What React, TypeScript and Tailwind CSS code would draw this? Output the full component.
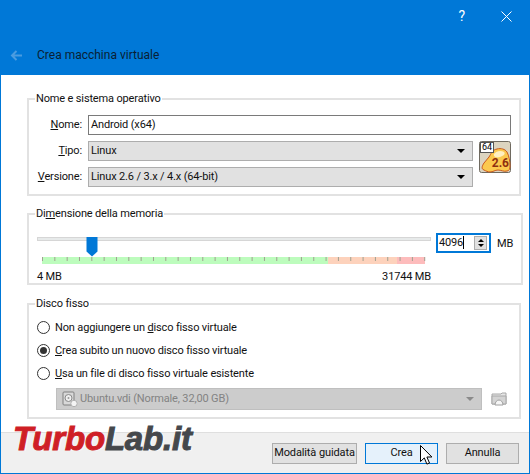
/**
 * Crea macchina virtuale dialog
 * VirtualBox wizard in expert mode
 */

const TICKS = Array.from({ length: 32 }, (_, i) => 0.5 + i * 12.33);

function LinuxIcon() {
  return (
    <div className="relative w-8 h-8 shrink-0">
      <svg width="32" height="32" viewBox="0 0 32 32" className="block">
        <rect x="0.5" y="0.5" width="31" height="31" rx="2" fill="#dcd4c0" stroke="#6f6a60" />
        <path
          d="M5 29c-3-1-2-4 0-7 2-2 3-4 5-6 2-3 3-7 8-8 4-1 8 0 10 3 2 4 3 9 3 14 0 3-1 5-3 5-3 1-6-1-9-1-3 0-5 2-8 2-2 0-4-1-6-2z"
          fill="#fbc94e"
          stroke="#c9581c"
        />
        <path d="M15 13c2-3 7-4 10-2 2 2-1 4-4 5-3 1-7 0-6-3z" fill="#fff0c0" />
      </svg>
      <span className="absolute right-[2px] bottom-[4px] text-[12px] leading-none font-bold tracking-normal text-[#8f2f10]">2.6</span>
      <span className="absolute left-[1px] top-[1px] w-[14px] h-[11px] bg-white border border-[#555] text-[9px] leading-[9px] tracking-normal text-center text-black">64</span>
    </div>
  );
}

function Combo({ label, value }: { label: string; value: string }) {
  return (
    <div className="h-5 flex-1 flex items-center justify-between bg-[#e1e1e1] border border-[#adadad] pl-[2px] pr-[7px]">
      <span>{value}</span>
      <span className="w-0 h-0 border-x-[4px] border-x-transparent border-t-[4px] border-t-black" aria-label={label} />
    </div>
  );
}

function Radio({ checked, children }: { checked?: boolean; children: React.ReactNode }) {
  return (
    <div className="flex items-center gap-[5px] h-[13px]">
      <span className="w-[13px] h-[13px] rounded-full border border-[#333] bg-white flex items-center justify-center">
        {checked && <span className="w-[7px] h-[7px] rounded-full bg-[#333]" />}
      </span>
      <span>{children}</span>
    </div>
  );
}

function DiskIcon() {
  return (
    <svg width="16" height="16" viewBox="0 0 16 16" className="shrink-0">
      <rect x="1" y="1" width="11" height="13" rx="1" fill="#d8d8d8" stroke="#808080" />
      <circle cx="6.5" cy="7" r="3.5" fill="#efefef" stroke="#8a8a8a" />
      <circle cx="6.5" cy="7" r="1" fill="#9a9a9a" />
      <circle cx="12" cy="12.5" r="3.2" fill="#f4f4f4" stroke="#b0b0b0" />
    </svg>
  );
}

function FolderIcon() {
  return (
    <svg width="16" height="16" viewBox="0 0 16 16" className="shrink-0">
      <path d="M1 3h9l1-1h4v11H1z" fill="#e6e6e6" stroke="#a8a8a8" />
      <path d="M1 5h14v8H1z" fill="#d4d4d4" stroke="#a8a8a8" />
      <path d="M4 14c0-3 2-5 4-5s4 2 4 5z" fill="#f6f6f6" stroke="#a0a0a0" />
    </svg>
  );
}

export default function App() {
  return (
    <div className="relative w-[530px] h-[474px] overflow-hidden flex flex-col bg-white border border-[#0078d7] font-['Roboto',sans-serif] text-[11px] leading-4 tracking-[-0.15px] text-[#111]">
      {/* Title bar */}
      <div className="h-[74px] bg-[#0078d7] flex flex-col shrink-0">
        <div className="flex justify-end items-center h-[30px] text-white">
          <span className="text-[14px] mr-[36px]">?</span>
          <svg width="11" height="11" viewBox="0 0 11 11" className="mr-[17px]">
            <path d="M0.5 0.5l10 10M10.5 0.5l-10 10" stroke="#fff" fill="none" />
          </svg>
        </div>
        <div className="flex items-center pl-[9px] mt-[16px]">
          <svg width="13" height="11" viewBox="0 0 13 11">
            <path d="M12 5.5H2M6.5 1L2 5.5 6.5 10" stroke="#4a9ce0" strokeWidth="2" fill="none" />
          </svg>
          <span className="ml-[14px] text-[12px] tracking-normal text-[#0a1f33]">Crea macchina virtuale</span>
        </div>
      </div>

      {/* Groups */}
      <div className="flex-1 flex flex-col pl-[26px] pr-[8px] pt-[16px]">
        <fieldset className="h-[105px] border-2 border-[#e2e2e2] px-[8px]">
          <legend className="-ml-[2px] px-[1px]">Nome e sistema operativo</legend>
          <div className="flex flex-col gap-[6px] pt-[8px]">
            <div className="flex items-center gap-[6px]">
              <span className="w-[45px] text-right"><span className="underline">N</span>ome:</span>
              <div className="h-5 flex-1 flex items-center border border-[#7a7a7a] pl-[2px]">Android (x64)</div>
            </div>
            <div className="flex gap-[6px]">
              <div className="flex-1 flex flex-col gap-[6px]">
                <div className="flex items-center gap-[6px]">
                  <span className="w-[45px] text-right"><span className="underline">T</span>ipo:</span>
                  <Combo label="Tipo" value="Linux" />
                </div>
                <div className="flex items-center gap-[6px]">
                  <span className="w-[45px] text-right"><span className="underline">V</span>ersione:</span>
                  <Combo label="Versione" value="Linux 2.6 / 3.x / 4.x (64-bit)" />
                </div>
              </div>
              <LinuxIcon />
            </div>
          </div>
        </fieldset>

        <fieldset className="h-[79px] mt-[10px] border-2 border-[#e2e2e2] px-[8px]">
          <legend className="-ml-[2px] px-[1px]">Di<span className="underline">m</span>ensione della memoria</legend>
          <div className="flex gap-[5px] pt-[8px]">
            <div className="w-[394px] shrink-0">
              <div className="relative h-[20px]">
                <div className="h-[4px] mt-[7px] bg-[#e7eaea] border border-[#d6d6d6]" />
                <svg width="12" height="20" viewBox="0 0 12 20" className="absolute left-[49px] top-0">
                  <path d="M0.5 0h11v14.5l-5.5 5-5.5-5z" fill="#0078d7" />
                </svg>
              </div>
              <svg width="384" height="7" viewBox="0 0 384 7" className="block ml-[5px]">
                <rect y="0" width="286" height="7" fill="#bdfcbd" />
                <rect x="286" y="0" width="69" height="7" fill="#fdd2bc" />
                <rect x="355" y="0" width="28" height="7" fill="#fdbcbc" />
                {TICKS.map((x) => (
                  <line key={x} x1={x} x2={x} y1="0" y2="4" stroke="#a0a090" />
                ))}
              </svg>
              <div className="flex justify-between mt-[5px]">
                <span>4 MB</span>
                <span>31744 MB</span>
              </div>
            </div>
            <div className="flex items-start gap-[6px]">
              <div className="w-[55px] h-[20px] flex items-center justify-between border-2 border-[#0078d7] pl-[1px] pr-[2px] mt-[3px]">
                <span>4096<span className="border-r border-black" /></span>
                <div className="w-[13px] h-[14px] bg-[#e1e1e1] border border-[#adadad] flex flex-col items-center justify-center gap-[2px]">
                  <span className="w-0 h-0 border-x-[3px] border-x-transparent border-b-[3px] border-b-black" />
                  <span className="w-0 h-0 border-x-[3px] border-x-transparent border-t-[3px] border-t-black" />
                </div>
              </div>
              <span className="mt-[6px]">MB</span>
            </div>
          </div>
        </fieldset>

        <fieldset className="h-[123px] mt-[11px] border-2 border-[#e2e2e2] px-[8px]">
          <legend className="-ml-[2px] px-[1px]">Disco fisso</legend>
          <div className="flex flex-col gap-[10px] pt-[9px]">
            <Radio>Non aggiungere un <span className="underline">d</span>isco fisso virtuale</Radio>
            <Radio checked><span className="underline">C</span>rea subito un nuovo disco fisso virtuale</Radio>
            <Radio><span className="underline">U</span>sa un file di disco fisso virtuale esistente</Radio>
          </div>
          <div className="flex items-center gap-[9px] mt-[8px] pl-[19px] pr-[4px]">
            <div className="h-[22px] flex-1 flex items-center justify-between bg-[#cccccc] border border-[#bfbfbf] pl-[5px] pr-[7px] text-[#838383]">
              <span className="flex items-center gap-[2px]"><DiskIcon />Ubuntu.vdi (Normale, 32,00 GB)</span>
              <span className="w-0 h-0 border-x-[4px] border-x-transparent border-t-[4px] border-t-[#8a8a8a]" />
            </div>
            <FolderIcon />
          </div>
        </fieldset>
      </div>

      {/* Footer */}
      <div className="h-[41px] shrink-0 bg-[#f0f0f0] border-t border-[#dfdfdf] flex items-center justify-end gap-2 pr-[10px]">
        <div className="w-[85px] h-[21px] flex items-center justify-center bg-[#e1e1e1] border border-[#adadad]">Modalità <span className="underline ml-[3px]">g</span>uidata</div>
        <div className="w-[73px] h-[21px] flex items-center justify-center bg-[#e5f1fb] border border-[#0078d7]">Crea</div>
        <div className="w-[73px] h-[21px] flex items-center justify-center bg-[#e1e1e1] border border-[#adadad]">Annulla</div>
      </div>

      {/* Cursor */}
      <svg width="13" height="21" viewBox="0 0 13 21" className="absolute left-[419px] top-[444px]">
        <path d="M0.5 0.5v16l3.8-3.6 2.6 6.2 2.6-1.1-2.6-6h5z" fill="#fff" stroke="#000" strokeLinejoin="round" />
      </svg>

      {/* Watermark */}
      <div className="absolute left-[12px] top-[418px] font-['Liberation_Sans',sans-serif] font-bold italic text-[33px] leading-[40px] tracking-[-0.2px] [text-shadow:2px_1px_0_rgba(255,255,255,0.5)]">
        <span className="text-[#cf1f26] [-webkit-text-stroke:1px_#cf1f26]">Turbo</span>
        <span className="text-[#45484c] [-webkit-text-stroke:1px_#45484c]">Lab.it</span>
      </div>
    </div>
  );
}
